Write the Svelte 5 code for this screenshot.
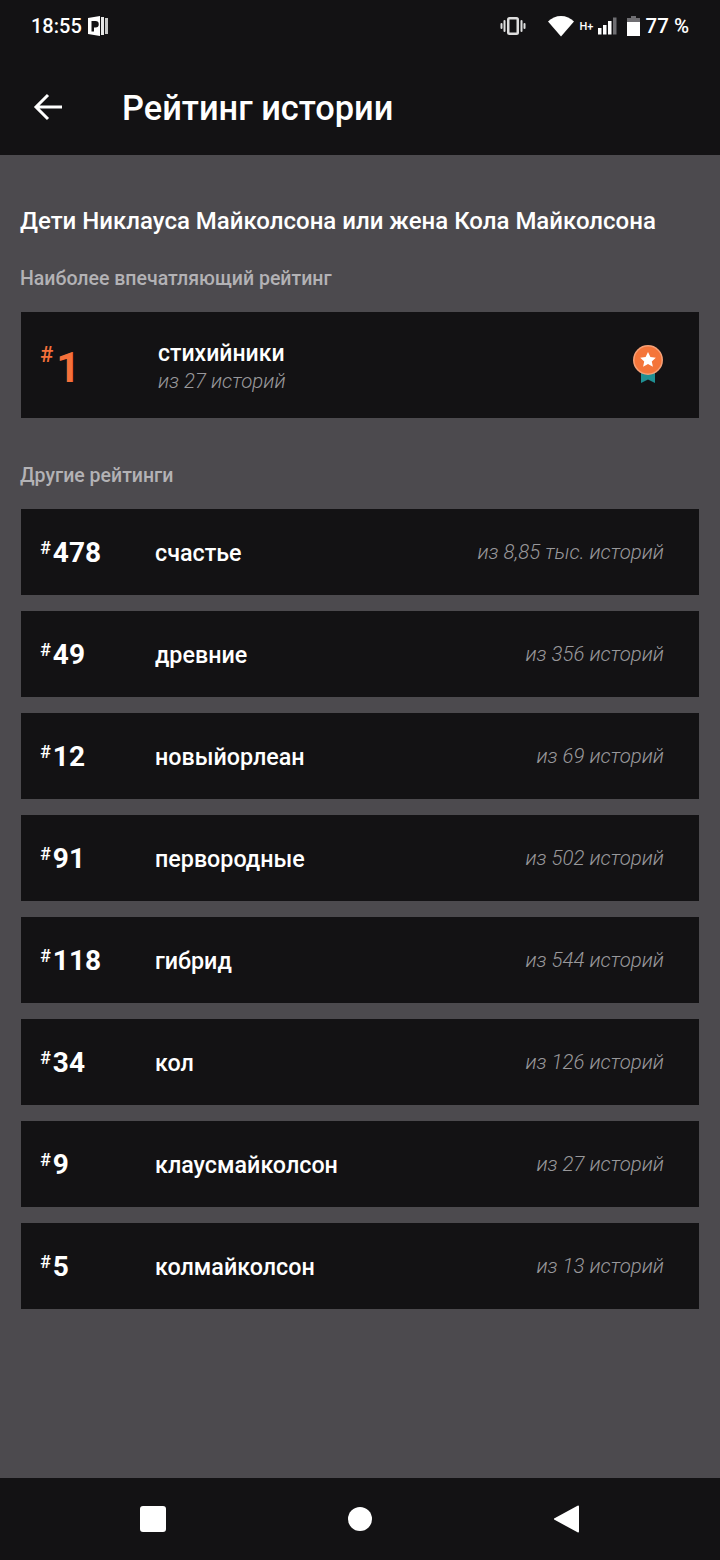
<script>
  const rows = [
    ['478', 'счастье', 'из 8,85 тыс. историй'],
    ['49', 'древние', 'из 356 историй'],
    ['12', 'новыйорлеан', 'из 69 историй'],
    ['91', 'первородные', 'из 502 историй'],
    ['118', 'гибрид', 'из 544 историй'],
    ['34', 'кол', 'из 126 историй'],
    ['9', 'клаусмайколсон', 'из 27 историй'],
    ['5', 'колмайколсон', 'из 13 историй']
  ];
</script>

<div class="page">
  <div class="status">
    <div class="left">
      <span>18:55</span>
      <svg width="22" height="22" viewBox="0 0 22 22"><path d="M1 3 13 1v20L1 19z" fill="#fff"/><path d="M4.500 6h4a3 3 0 0 1 0 6.500H7v4H4.500z" fill="#131214"/><path d="M14 2h3v18h-3z" fill="#e8e8e8"/><path d="M18 3h3v16h-3z" fill="#c8c8c8"/></svg>
    </div>
    <div class="right">
      <svg width="26" height="20" viewBox="0 0 26 20" fill="#dedede"><rect x="7" y="1" width="12" height="18" rx="2.500"/><rect x="9.500" y="3.500" width="7" height="13" fill="#131214"/><rect x="3.500" y="4" width="2" height="12" rx="1"/><rect x="20.500" y="4" width="2" height="12" rx="1"/><rect x="0.500" y="7" width="2" height="6" rx="1"/><rect x="23.500" y="7" width="2" height="6" rx="1"/></svg>
      <svg class="wifi" width="26" height="22" viewBox="0 0 26 22"><path d="M13 21.500 0 6.500C3.500 3 8 1 13 1s9.500 2 13 5.500z" fill="#fff"/></svg>
      <span class="hplus">H+</span>
      <svg class="sig" width="19" height="18" viewBox="0 0 19 18" fill="#fff"><rect x="0" y="11" width="3.500" height="6.500"/><rect x="5" y="8" width="3.500" height="9.500"/><rect x="10" y="4" width="3.500" height="13.500"/><rect x="15" y="0.500" width="3.500" height="17" fill="#6f6e72"/></svg>
      <svg class="bat" width="13" height="20" viewBox="0 0 13 20" fill="#fff"><path d="M4 0h5v2h4v4H0V2h4z" fill="#6f6e72"/><rect x="0" y="6" width="13" height="14"/></svg>
      <span>77 %</span>
    </div>
  </div>
  <header>
    <svg width="30" height="28" viewBox="0 0 30 28" fill="none" stroke="#fff" stroke-width="3"><path d="M29 14H3M15 2 3 14l12 12"/></svg>
    <h1>Рейтинг истории</h1>
  </header>
  <main>
    <h2>Дети Никлауса Майколсона или жена Кола Майколсона</h2>
    <h3>Наиболее впечатляющий рейтинг</h3>
    <section class="best">
      <div class="rank"><span class="hash">#</span><span class="num">1</span></div>
      <div class="info"><b>стихийники</b><i>из 27 историй</i></div>
      <svg class="medal" width="32" height="40" viewBox="0 0 32 40"><path d="M9 27v12l7-3.500 7 3.500V27z" fill="#1f8f92"/><circle cx="16" cy="16" r="15" fill="#f6a077"/><circle cx="16" cy="16" r="13.500" fill="#f4753a"/><path d="m16 8 2.400 5 5.400.7-4 3.700 1.100 5.400-4.900-2.700-4.900 2.700 1.100-5.400-4-3.700 5.400-.7z" fill="#fff"/></svg>
    </section>
    <h3 class="other">Другие рейтинги</h3>
    <div class="list">
      {#each rows as r}
        <div class="row">
          <div class="r"><span class="h">#</span><span>{r[0]}</span></div>
          <b>{r[1]}</b>
          <i>{r[2]}</i>
        </div>
      {/each}
    </div>
  </main>
  <nav>
    <span class="square"></span>
    <span class="dot"></span>
    <svg width="26" height="28" viewBox="0 0 26 28"><path d="M25 1.500v25a1 1 0 0 1-1.500.8L1 15a1 1 0 0 1 0-2L23.500.7A1 1 0 0 1 25 1.500z" fill="#fff"/></svg>
  </nav>
</div>

<style>
  :global(body) { margin: 0; background: #4c4a4e; }
  .page { width: 720px; height: 1560px; display: flex; flex-direction: column; font-family: Roboto, "Noto Sans", sans-serif; color: #fff; background: #4c4a4e; overflow: hidden; }
  .status { height: 52px; flex: none; background: #131214; display: flex; justify-content: space-between; align-items: center; padding: 0 32px 0 31px; font-size: 20px; font-weight: 500; box-sizing: border-box; }
  .left, .right { display: flex; align-items: center; }
  .left { gap: 5px; }
  .right { margin-right: -1px; }
  .right > span:last-child { font-size: 20.500px; }
  .wifi { margin-left: 22px; }
  .hplus { font-size: 11px; margin-left: 6px; width: 14px; }
  .sig { margin-left: 4px; }
  .bat { margin: 0 6px 0 10px; }
  header { height: 103px; flex: none; background: #131214; display: flex; align-items: center; padding: 7px 0 0 33px; box-sizing: border-box; gap: 59px; }
  h1 { margin: 0; padding-top: 2px; font-size: 34.400px; font-weight: 500; }
  main { flex: 1; padding: 0 20px; }
  h2 { margin: 50px 0 0; font-size: 24px; line-height: 32px; font-weight: 500; }
  h3 { margin: 28px 0 0; font-size: 19.500px; line-height: 28px; font-weight: 500; color: #b3b2b5; }
  .best { margin: 19px 1px 0; height: 106px; background: #131214; box-sizing: border-box; display: flex; align-items: center; padding: 0 35px 0 19px; }
  .rank { width: 118px; display: flex; color: #f5703a; padding-top: 6px; }
  .hash { font-size: 22px; font-weight: 500; line-height: 26px; }
  .num { font-size: 42px; font-weight: 700; margin-left: 3px; line-height: 52px; }
  .info { flex: 1; display: flex; flex-direction: column; gap: 0; padding-top: 3px; }
  .info b { font-size: 23px; font-weight: 500; line-height: 28px; }
  i { font-size: 20.400px; color: #99989b; font-style: italic; font-weight: 300; line-height: 26px; }
  .medal { margin-top: -2px; }
  .other { margin-top: 44px; }
  .list { margin: 19px 1px 0; display: flex; flex-direction: column; gap: 16px; }
  .row { height: 86px; background: #131214; display: flex; align-items: center; box-sizing: border-box; padding: 0 35px 0 19px; }
  .r { width: 115px; display: flex; font-size: 28px; font-weight: 700; line-height: 36px; padding-top: 2px; }
  .h { font-size: 18px; font-weight: 500; line-height: 26px; margin-right: 2px; }
  .row b { flex: 1; font-size: 23.300px; font-weight: 500; padding-top: 2px; }
  nav { height: 82px; flex: none; background: #131214; display: flex; align-items: center; }
  .square { width: 26px; height: 26px; border-radius: 3px; background: #fff; margin-left: 140px; }
  .dot { width: 24px; height: 24px; border-radius: 50%; background: #fff; margin-left: 182px; }
  nav svg { margin-left: 182px; }
</style>
